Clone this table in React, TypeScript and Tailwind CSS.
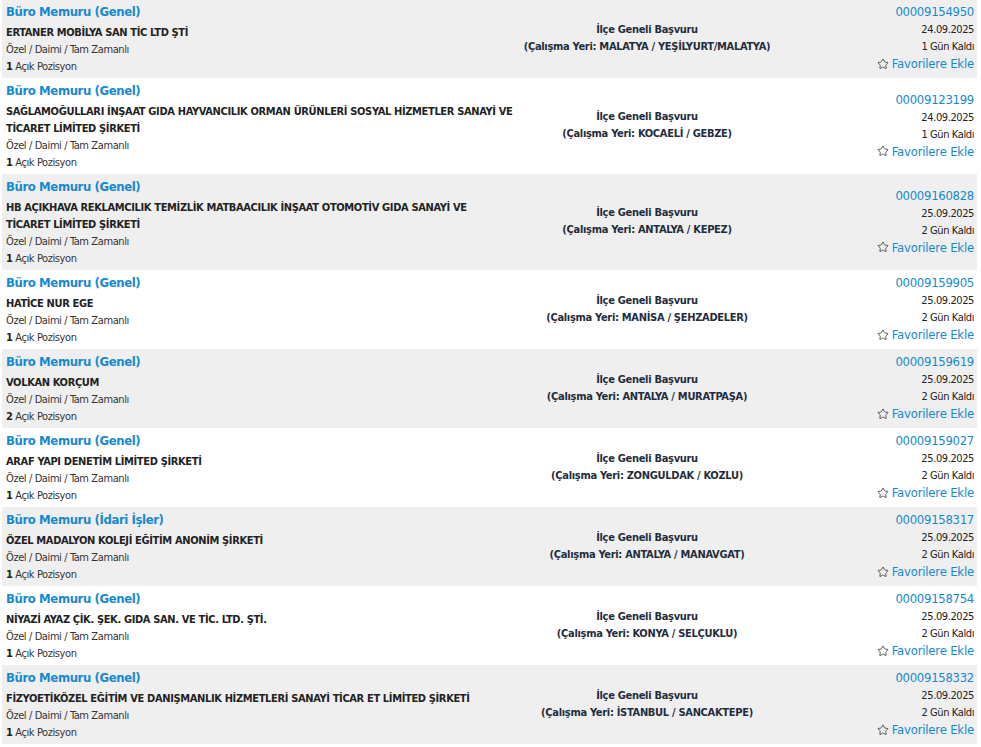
import { Star } from "lucide-react";

interface Listing {
  title: string;
  company: string;
  positions: number;
  city: string;
  id: string;
  date: string;
  days: number;
}

const LISTINGS: Listing[] = [
  { title: "Büro Memuru (Genel)", company: "ERTANER MOBİLYA SAN TİC LTD ŞTİ", positions: 1, city: "MALATYA / YEŞİLYURT/MALATYA", id: "00009154950", date: "24.09.2025", days: 1 },
  { title: "Büro Memuru (Genel)", company: "SAĞLAMOĞULLARI İNŞAAT GIDA HAYVANCILIK ORMAN ÜRÜNLERİ SOSYAL HİZMETLER SANAYİ VE TİCARET LİMİTED ŞİRKETİ", positions: 1, city: "KOCAELİ / GEBZE", id: "00009123199", date: "24.09.2025", days: 1 },
  { title: "Büro Memuru (Genel)", company: "HB AÇIKHAVA REKLAMCILIK TEMİZLİK MATBAACILIK İNŞAAT OTOMOTİV GIDA SANAYİ VE TİCARET LİMİTED ŞİRKETİ", positions: 1, city: "ANTALYA / KEPEZ", id: "00009160828", date: "25.09.2025", days: 2 },
  { title: "Büro Memuru (Genel)", company: "HATİCE NUR EGE", positions: 1, city: "MANİSA / ŞEHZADELER", id: "00009159905", date: "25.09.2025", days: 2 },
  { title: "Büro Memuru (Genel)", company: "VOLKAN KORÇUM", positions: 2, city: "ANTALYA / MURATPAŞA", id: "00009159619", date: "25.09.2025", days: 2 },
  { title: "Büro Memuru (Genel)", company: "ARAF YAPI DENETİM LİMİTED ŞİRKETİ", positions: 1, city: "ZONGULDAK / KOZLU", id: "00009159027", date: "25.09.2025", days: 2 },
  { title: "Büro Memuru (İdari İşler)", company: "ÖZEL MADALYON KOLEJİ EĞİTİM ANONİM ŞİRKETİ", positions: 1, city: "ANTALYA / MANAVGAT", id: "00009158317", date: "25.09.2025", days: 2 },
  { title: "Büro Memuru (Genel)", company: "NİYAZİ AYAZ ÇİK. ŞEK. GIDA SAN. VE TİC. LTD. ŞTİ.", positions: 1, city: "KONYA / SELÇUKLU", id: "00009158754", date: "25.09.2025", days: 2 },
  { title: "Büro Memuru (Genel)", company: "FİZYOETİKÖZEL EĞİTİM VE DANIŞMANLIK HİZMETLERİ SANAYİ TİCAR ET LİMİTED ŞİRKETİ", positions: 1, city: "İSTANBUL / SANCAKTEPE", id: "00009158332", date: "25.09.2025", days: 2 },
];

/** One job posting row – title/company on the left, location centred, id/date/favourite on the right. */
function ListingRow({ item, shaded }: { item: Listing; shaded: boolean }) {
  return (
    <li
      className={`grid grid-cols-[516px_258px_1fr] items-center ${
        shaded ? "bg-[#efefef]" : "bg-white"
      }`}
    >
      {/* Left: title + company */}
      <div className="pl-[4px] pr-[5.5px] pt-[4px] pb-[3px]">
        <div className="text-[13px] font-bold leading-[18px] tracking-[-0.4px] text-[#1789d0]">
          {item.title}
        </div>
        <div className="pt-[3px] text-[11px] font-bold leading-[17px] tracking-[-0.35px] text-[#222]">
          {item.company}
        </div>
        <div className="text-[11px] leading-[17px] tracking-[-0.4px] text-[#333]">
          Özel / Daimi / Tam Zamanlı
        </div>
        <div className="text-[11px] leading-[17px] tracking-[-0.4px] text-[#333]">
          <span className="font-bold text-[#222]">{item.positions}</span> Açık Pozisyon
        </div>
      </div>
      {/* Middle: location */}
      <div className="flex flex-col items-center whitespace-nowrap pb-[2px] text-[11px] font-bold leading-[17px] tracking-[-0.3px] text-[#1f2d3d]">
        <div>İlçe Geneli Başvuru</div>
        <div>(Çalışma Yeri: {item.city})</div>
      </div>
      {/* Right: id / date / favourite */}
      <div className="flex flex-col items-end pr-[3px] pb-[2px]">
        <span className="text-[13px] leading-[18px] tracking-[-0.3px] text-[#1789d0]">{item.id}</span>
        <span className="text-[11px] leading-[17px] tracking-[-0.4px] text-[#222]">{item.date}</span>
        <span className="text-[11px] leading-[17px] tracking-[-0.4px] text-[#222]">
          {item.days} Gün Kaldı
        </span>
        <span className="flex items-center gap-[3px] text-[13px] leading-[17px] tracking-[-0.2px] text-[#1789d0]">
          <Star className="h-[12px] w-[12px] text-[#333]" strokeWidth={1.6} />
          Favorilere Ekle
        </span>
      </div>
    </li>
  );
}

export default function App() {
  return (
    <div
      className="min-h-[747px] overflow-hidden bg-white"
      style={{ fontFamily: '"DejaVu Sans Condensed", "DejaVu Sans", sans-serif' }}
    >
      <ul className="-mt-[1px] ml-[2px] w-[975px]">
        {LISTINGS.map((item, i) => (
          <ListingRow key={item.id} item={item} shaded={i % 2 === 0} />
        ))}
      </ul>
    </div>
  );
}
